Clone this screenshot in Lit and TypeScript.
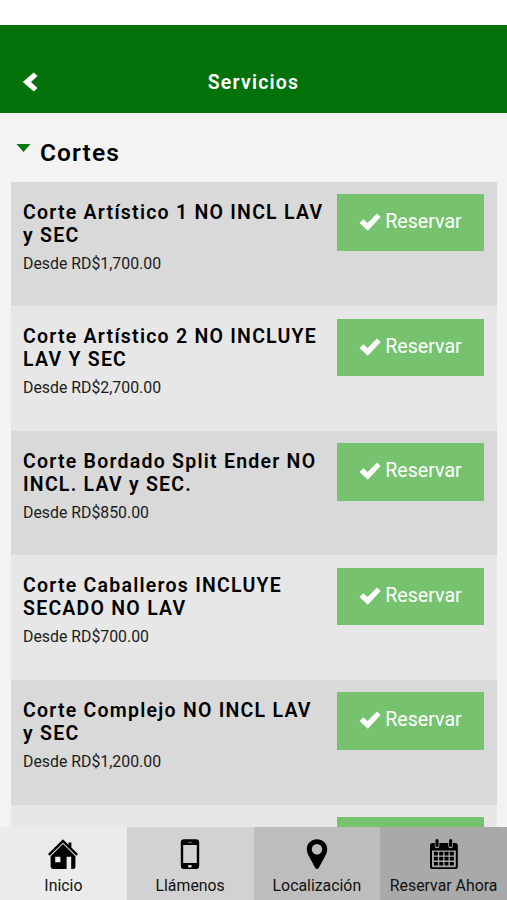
import { LitElement, html, css, svg } from "lit";
import { customElement, property } from "lit/decorators.js";

interface Service {
  name: string;
  price: string;
}

const services: Service[] = [
  { name: "Corte Artístico 1 NO INCL LAV y SEC", price: "RD$1,700.00" },
  { name: "Corte Artístico 2 NO INCLUYE LAV Y SEC", price: "RD$2,700.00" },
  { name: "Corte Bordado Split Ender NO INCL. LAV y SEC.", price: "RD$850.00" },
  { name: "Corte Caballeros INCLUYE SECADO NO LAV", price: "RD$700.00" },
  { name: "Corte Complejo NO INCL LAV y SEC", price: "RD$1,200.00" },
  { name: "", price: "" },
];

const icons = {
  home: svg`
    <path d="M0 15 15 .3l5.500 5.400V3.400h2.900v5.200l6.600 6.400-1.600 1.700L15 3.800 1.600 16.700z"/>
    <path fill-rule="evenodd" d="M2.600 17.200 15 5.100l12.400 12.100V28q0 2-2 2h-2.200V17.800h-4.600V30H5q-2.400 0-2.400-2.400zM7.200 17.800v5.400h5.200v-5.400z"/>`,
  phone: svg`
    <path fill-rule="evenodd" d="M9 .2h12q3.200 0 3.200 3.200v23.600q0 3.200-3.200 3.200H9q-3.200 0-3.200-3.200V3.400Q5.800.2 9 .2zM8.200 6v18h13.600V6zM13.200 26v2.600h3.400v-2.600z"/>
    <rect x="12.600" y="2.800" width="4.800" height="1.400" rx=".6" fill="#555"/>`,
  pin: svg`
    <path fill-rule="evenodd" d="M15 .2c5.900 0 10.200 4.400 10.200 10 0 2.600-.9 4.700-2 6.900L16.700 29q-1.700 2-3.400 0L6.800 17.100C5.700 14.900 4.800 12.800 4.800 10.200c0-5.600 4.300-10 10.200-10zM15 5a5.200 5.200 0 1 0 0 10.400 5.200 5.200 0 0 0 0-10.400z"/>`,
  calendar: svg`
    <path fill-rule="evenodd" d="M3.500 4h2.300v3q0 2.300 2.300 2.300T10.400 7V4h8.900v3q0 2.300 2.300 2.300T23.900 7V4h2.300q2.600 0 2.600 2.600v20.800q0 2.600-2.600 2.600H3.500Q1 30 1 27.400V6.600Q1 4 3.500 4zM3 11.600v15.600q0 1 1 1h21.800q1 0 1-1V11.600z"/>
    <rect x="6.500" y=".1" width="3.100" height="7.900" rx="1.500"/>
    <rect x="20.100" y=".1" width="3.100" height="7.900" rx="1.500"/>
    ${[12.7, 17.8, 22.9].map((y) =>
      [4.9, 10.2, 15.5, 20.8].map((x) => svg`<rect x=${x} y=${y} width="4" height="3.700" rx=".5"/>`)
    )}`,
};

@customElement("service-row")
class ServiceRow extends LitElement {
  @property() name = "";
  @property() price = "";

  static styles = css`
    :host {
      display: flex;
      box-sizing: border-box;
      height: 124.6px;
      flex: none;
      padding: 12.3px 12.5px 0 12px;
      justify-content: space-between;
    }
    .info {
      width: 304px;
      padding-top: 6.6px;
    }
    .name {
      margin: 0;
      font-size: 19.5px;
      line-height: 23px;
      font-weight: 600;
      letter-spacing: 1.24px;
      color: #000;
    }
    .price {
      margin: 7.1px 0 0;
      font-size: 15.85px;
      line-height: 20px;
      color: #1c1c1c;
    }
    .book {
      box-sizing: border-box;
      width: 147.5px;
      height: 57.5px;
      flex: none;
      display: flex;
      justify-content: center;
      padding: 0;
      border: 0;
      background: #77c26f;
      color: #fff;
      font: 19.6px/55px Roboto, sans-serif;
      gap: 4.5px;
    }
    .check {
      width: 22px;
      height: 18px;
      margin-top: 19px;
      fill: #fff;
    }
  `;

  render() {
    return html`
      <div class="info">
        <h3 class="name">${this.name}</h3>
        ${this.price ? html`<p class="price">Desde ${this.price}</p>` : ""}
      </div>
      <button class="book">
        ${this.name
          ? html`<svg class="check" viewBox="0 0 22 18"><path d="M.6 10 4.300 6.200 8.600 10.100 18 .500 21.600 4.100 8.800 17.700z" /></svg>
              <span>Reservar</span>`
          : ""}
      </button>
    `;
  }
}

@customElement("app-root")
class AppRoot extends LitElement {
  static styles = css`
    :host {
      display: flex;
      flex-direction: column;
      height: 100vh;
      overflow: hidden;
      background: #f3f3f3;
      font-family: Roboto, sans-serif;
      color: #000;
    }
    .status {
      height: 25.4px;
      flex: none;
      background: #fff;
    }
    .header {
      height: 88px;
      flex: none;
      box-sizing: border-box;
      padding: 25px 22px 0;
      display: grid;
      grid-template-columns: 18px 1fr 18px;
      align-items: center;
      background: #04720a;
      color: #fff;
    }
    .back {
      width: 18px;
      height: 20px;
      fill: #fff;
    }
    .title {
      margin: 0;
      padding-top: 1px;
      text-align: center;
      font-size: 19.5px;
      font-weight: 600;
      letter-spacing: 1.2px;
    }
    .content {
      flex: 1;
      min-height: 0;
      overflow: hidden;
      display: flex;
      flex-direction: column;
      padding: 0 10.5px 0 11px;
    }
    .category {
      height: 68.3px;
      flex: none;
      display: flex;
      padding-left: 5px;
      gap: 9px;
    }
    .caret {
      width: 15px;
      height: 8px;
      margin-top: 31px;
      fill: #087a0c;
    }
    .category-name {
      margin: 0;
      font-size: 24.5px;
      line-height: 79px;
      font-weight: 600;
      letter-spacing: 1.1px;
    }
    .odd {
      background: #d9d9d9;
    }
    .even {
      background: #e7e7e7;
    }
    .nav {
      height: 73.5px;
      flex: none;
      display: grid;
      grid-template-columns: repeat(4, 1fr);
    }
    .tab {
      display: flex;
      flex-direction: column;
      align-items: center;
      padding-top: 12.2px;
      font-size: 15.85px;
      line-height: 20px;
      gap: 6.6px;
      white-space: nowrap;
      color: #111;
    }
    .tab:nth-child(1) { background: #ebebeb; }
    .tab:nth-child(2) { background: #d2d2d2; }
    .tab:nth-child(3) { background: #bdbdbd; }
    .tab:nth-child(4) { background: #a9a9a9; }
    .icon {
      width: 30px;
      height: 30.5px;
      fill: #000;
    }
  `;

  private tab(label: string, icon: unknown) {
    return html`<div class="tab"><svg class="icon" viewBox="0 0 30 30.5">${icon}</svg><span>${label}</span></div>`;
  }

  render() {
    return html`
      <div class="status"></div>
      <header class="header">
        <svg class="back" viewBox="0 0 18 20"><path d="M.8 10 11.800.5 15.500 4.100 9 10 15.500 15.900 11.800 19.500z" /></svg>
        <h1 class="title">Servicios</h1>
      </header>
      <main class="content">
        <div class="category">
          <svg class="caret" viewBox="0 0 15 8"><path d="M.5 0H14.500L7.500 8z" /></svg>
          <h2 class="category-name">Cortes</h2>
        </div>
        ${services.map(
          (s, i) => html`<service-row class=${i % 2 ? "even" : "odd"} .name=${s.name} .price=${s.price}></service-row>`
        )}
      </main>
      <nav class="nav">
        ${this.tab("Inicio", icons.home)} ${this.tab("Llámenos", icons.phone)}
        ${this.tab("Localización", icons.pin)} ${this.tab("Reservar Ahora", icons.calendar)}
      </nav>
    `;
  }
}
